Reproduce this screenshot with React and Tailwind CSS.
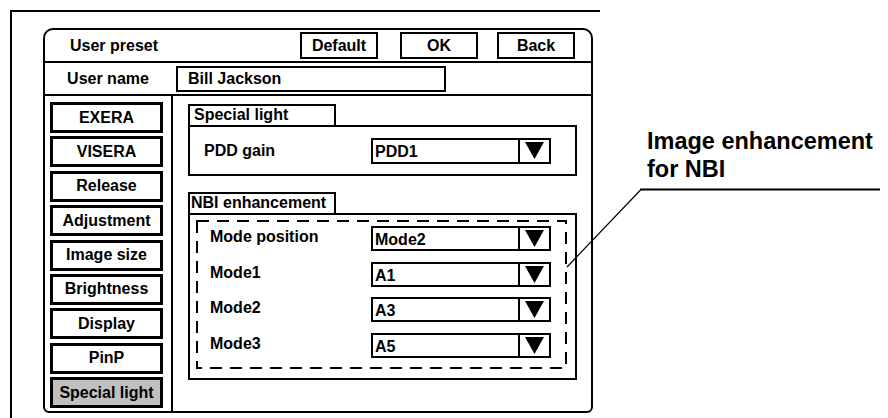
import React from "react";

function Arrow() {
  return (
    <svg width="19" height="17" viewBox="0 0 19 17">
      <polygon points="0,0 19,0 9.5,17" fill="#000" />
    </svg>
  );
}

function Select({ value, h = "h-[25px]" }) {
  return (
    <div className={`w-[180px] ${h} border-2 border-black flex bg-white`}>
      <span className="flex-1 pl-[2px] text-[16px] leading-none flex items-center pt-[3px]">{value}</span>
      <div className="w-[31px] border-l-2 border-black flex items-center justify-center">
        <Arrow />
      </div>
    </div>
  );
}

const sideItems = [
  "EXERA",
  "VISERA",
  "Release",
  "Adjustment",
  "Image size",
  "Brightness",
  "Display",
  "PinP",
  "Special light",
];

const modes = [
  ["Mode position", "Mode2"],
  ["Mode1", "A1"],
  ["Mode2", "A3"],
  ["Mode3", "A5"],
];

export default function App() {
  return (
    <div className="relative w-[888px] h-[418px] bg-white overflow-hidden text-black font-bold font-['Liberation_Sans',Arial,sans-serif] text-[16px] pt-[10px] pl-[10px]">
      <div className="w-[590px] h-[408px] border-t-2 border-l-2 border-black pt-[16px] pl-[31px]">
        <div className="w-[550px] h-[385px] border-2 border-black rounded-t-[10px] rounded-b-[6px] flex flex-col">
          {/* Header */}
          <div className="h-[33px] border-b-2 border-black flex items-center">
            <span className="w-[255px] pl-[25px]">User preset</span>
            <div className="w-[78px] h-[27px] border-[2.5px] border-black flex items-center justify-center">Default</div>
            <div className="ml-[22px] w-[78px] h-[27px] border-[2.5px] border-black flex items-center justify-center">OK</div>
            <div className="ml-[19px] w-[78px] h-[27px] border-[2.5px] border-black flex items-center justify-center">Back</div>
          </div>
          {/* User name */}
          <div className="h-[33px] border-b-2 border-black flex items-center">
            <span className="w-[126px] text-center">User name</span>
            <div className="ml-[5px] w-[270px] h-[26px] border-2 border-black flex items-center pl-[10px]">Bill Jackson</div>
          </div>
          {/* Body */}
          <div className="flex-1 flex">
            <div className="w-[128px] border-r-2 border-black pt-[6px] pl-[5px] flex flex-col gap-[3.4px]">
              {sideItems.map((s) => (
                <div
                  key={s}
                  className={`w-[113px] h-[31px] border-[3px] border-black flex items-center justify-center ${
                    s === "Special light" ? "bg-[#c0c0c0]" : "bg-white"
                  }`}
                >
                  {s}
                </div>
              ))}
            </div>
            <div className="flex-1 pl-[15px] pt-[8px] flex flex-col">
              <div className="w-[148px] h-[21px] border-2 border-b-0 border-black pl-[4px] leading-[17px]">Special light</div>
              <div className="w-[389px] h-[51px] border-2 border-black flex items-center">
                <span className="w-[181px] pl-[14px]">PDD gain</span>
                <Select value="PDD1" h="h-[26px]" />
              </div>
              <div className="mt-[16px] w-[148px] h-[21px] border-2 border-b-0 border-black pl-[1px] leading-[17px]">NBI enhancement</div>
              <div className="w-[389px] h-[167px] border-2 border-black pt-[5px] pl-[6px] pr-[8px] pb-[9px]">
                <div className="relative w-full h-full pt-[6px] pl-[14px] flex flex-col gap-[10.6px]">
                  <svg className="absolute inset-0 w-full h-full pointer-events-none" width="100%" height="100%">
                    <rect x="1" y="1" width="369" height="147" fill="none" stroke="#000" strokeWidth="2" strokeDasharray="12 8" />
                  </svg>
                  {modes.map(([label, val]) => (
                    <div key={label} className="h-[25px] flex items-center">
                      <span className="w-[161px] leading-none pb-[3px]">{label}</span>
                      <Select value={val} />
                    </div>
                  ))}
                </div>
              </div>
            </div>
          </div>
        </div>
      </div>

      <div className="absolute left-[647px] top-[127px] text-[23.5px] leading-[28px]">
        Image enhancement
        <br />
        for NBI
      </div>
      <svg className="absolute left-0 top-0 pointer-events-none" width="888" height="418">
        <line x1="640" y1="189.5" x2="880" y2="189.5" stroke="#000" strokeWidth="2" />
        <line x1="641" y1="189.5" x2="567" y2="267" stroke="#000" strokeWidth="1.2" />
      </svg>
    </div>
  );
}
